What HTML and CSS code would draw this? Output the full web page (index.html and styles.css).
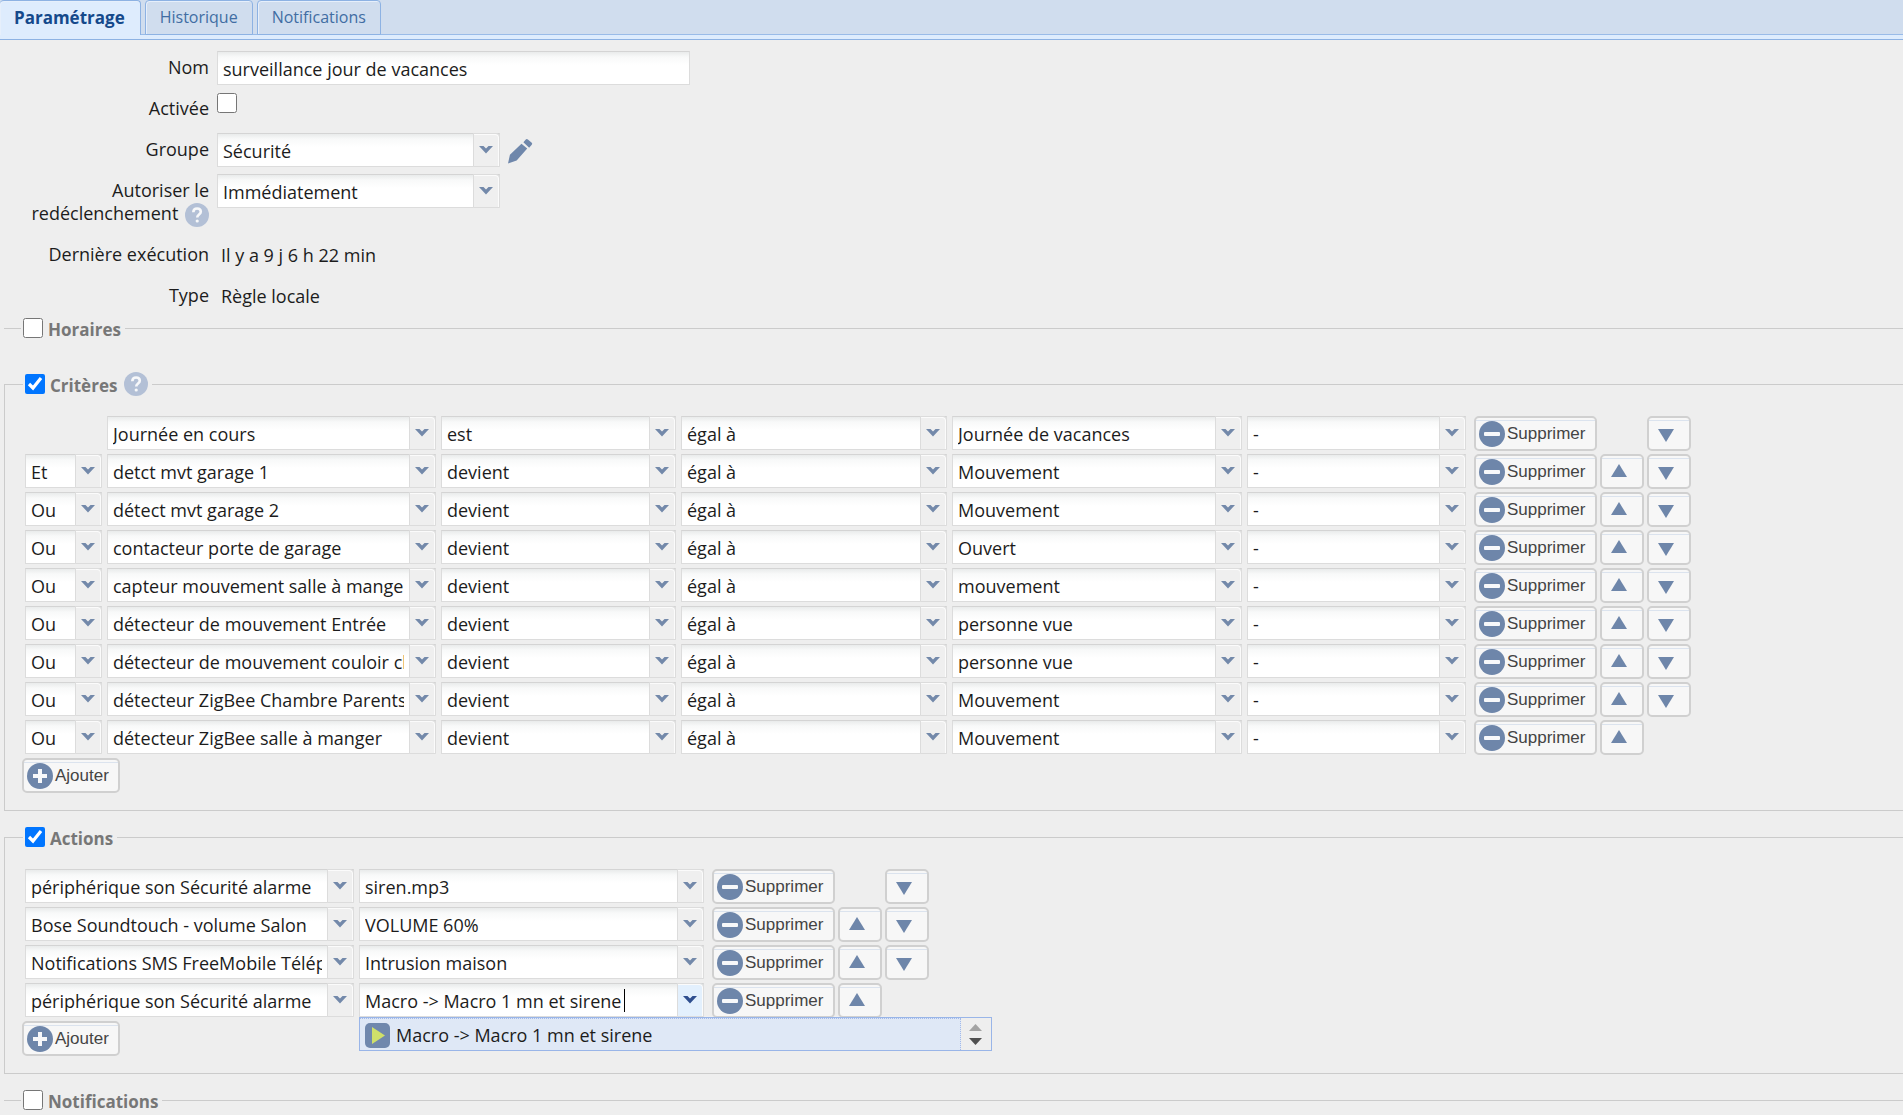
FILE: index.html
```html
<!DOCTYPE html>
<html lang="fr">
<head>
  <meta charset="UTF-8">
  <title>surveillance jour de vacances</title>
  <link rel="stylesheet" href="styles.css">
</head>
<body>
  <svg class="sprite" aria-hidden="true">
    <symbol id="i-chevron" viewBox="0 0 16 10"><path d="M1 1h4.500l2.500 2.500L10.500 1H15L8 8.500z"/></symbol>
    <symbol id="i-up" viewBox="0 0 16 13"><path d="M8 0l8 13H0z"/></symbol>
    <symbol id="i-down" viewBox="0 0 16 13"><path d="M0 0h16L8 13z"/></symbol>
    <symbol id="i-minus" viewBox="0 0 26 26"><circle cx="13" cy="13" r="13"/><rect class="ink" x="5" y="11" width="16" height="4" rx="1"/></symbol>
    <symbol id="i-plus" viewBox="0 0 26 26"><circle cx="13" cy="13" r="13"/><path class="ink" d="M11 6h4v5h5v4h-5v5h-4v-5H6v-4h5z"/></symbol>
    <symbol id="i-help" viewBox="0 0 24 24"><circle cx="12" cy="12" r="12"/><path class="mark" d="M8.300 9.200c.1-2.400 1.600-3.700 3.800-3.700s3.700 1.300 3.700 3.200c0 2.900-3.600 2.700-3.600 5.900"/><circle class="ink" cx="12.200" cy="18" r="1.600"/></symbol>
    <symbol id="i-pencil" viewBox="0 0 26 26"><path d="M0 26l2-9L14 5.500l6 5L9 23zM16 4l2.500-3q1-1 2.200 0l4 3.500q1 1 0 2L22 9.500z"/></symbol>
  </svg>

  <nav class="tabs">
    <a class="tab active" href="#">Paramétrage</a>
    <a class="tab" href="#">Historique</a>
    <a class="tab" href="#">Notifications</a>
  </nav>

  <main>
    <div class="form">
      <div class="field">
        <label for="nom">Nom</label>
        <input class="text" id="nom" type="text" value="surveillance jour de vacances">
      </div>
      <div class="field">
        <label for="active">Activée</label>
        <input class="check" id="active" type="checkbox">
      </div>
      <div class="field">
        <label for="groupe">Groupe</label>
        <span class="combo w-form">
          <select id="groupe"><option>Sécurité</option></select>
          <span class="trigger"><svg><use href="#i-chevron"/></svg></span>
        </span>
        <svg class="pencil"><use href="#i-pencil"/></svg>
      </div>
      <div class="field tall">
        <label for="delai">Autoriser le redéclenchement <svg class="help"><use href="#i-help"/></svg></label>
        <span class="combo w-form">
          <select id="delai"><option>Immédiatement</option></select>
          <span class="trigger"><svg><use href="#i-chevron"/></svg></span>
        </span>
      </div>
      <div class="field">
        <span class="label">Dernière exécution</span>
        <span class="display">Il y a 9 j 6 h 22 min</span>
      </div>
      <div class="field">
        <span class="label">Type</span>
        <span class="display">Règle locale</span>
      </div>
    </div>

    <fieldset class="collapsed">
      <legend><input class="check" id="horaires" type="checkbox"><label for="horaires">Horaires</label></legend>
    </fieldset>

    <fieldset>
      <legend><input class="check" id="criteres" type="checkbox" checked><label for="criteres">Critères</label><svg class="help"><use href="#i-help"/></svg></legend>
      <div class="rows" id="criteria"></div>
      <button class="btn add" type="button"><svg><use href="#i-plus"/></svg>Ajouter</button>
    </fieldset>

    <fieldset>
      <legend><input class="check" id="actions" type="checkbox" checked><label for="actions">Actions</label></legend>
      <div class="rows" id="action-list"></div>
      <button class="btn add" type="button"><svg><use href="#i-plus"/></svg>Ajouter</button>
    </fieldset>

    <fieldset class="collapsed">
      <legend><input class="check" id="notifications" type="checkbox"><label for="notifications">Notifications</label></legend>
    </fieldset>
  </main>

  <script>
    const criteria = [
      ["", "Journée en cours", "est", "égal à", "Journée de vacances", "-"],
      ["Et", "detct mvt garage 1", "devient", "égal à", "Mouvement", "-"],
      ["Ou", "détect mvt garage 2", "devient", "égal à", "Mouvement", "-"],
      ["Ou", "contacteur porte de garage", "devient", "égal à", "Ouvert", "-"],
      ["Ou", "capteur mouvement salle à manger", "devient", "égal à", "mouvement", "-"],
      ["Ou", "détecteur de mouvement Entrée", "devient", "égal à", "personne vue", "-"],
      ["Ou", "détecteur de mouvement couloir chambres", "devient", "égal à", "personne vue", "-"],
      ["Ou", "détecteur ZigBee Chambre Parents", "devient", "égal à", "Mouvement", "-"],
      ["Ou", "détecteur ZigBee salle à manger", "devient", "égal à", "Mouvement", "-"]
    ];
    const actions = [
      ["périphérique son Sécurité alarme", "siren.mp3"],
      ["Bose Soundtouch - volume Salon", "VOLUME 60%"],
      ["Notifications SMS FreeMobile Téléphone", "Intrusion maison"],
      ["périphérique son Sécurité alarme", "Macro -> Macro 1 mn et sirene"]
    ];
    const criteriaCols = [["w-link", "Liaison"], ["w-source", "Critère"], ["w-verb", "Verbe"], ["w-test", "Opérateur"], ["w-value", "Valeur"], ["w-extra", "Durée"]];
    const actionCols = [["w-source", "Périphérique"], ["w-action", "Valeur"]];

    const icon = name => `<svg><use href="#i-${name}"/></svg>`;

    function combo(value, col) {
      if (!value) return `<span class="combo ${col[0]} hidden"></span>`;
      return `<span class="combo ${col[0]}"><select aria-label="${col[1]}"><option>${value}</option></select><span class="trigger">${icon("chevron")}</span></span>`;
    }

    // editable combo with its suggestion list open
    function openCombo(value, col) {
      return `<span class="combo open ${col[0]}">
        <input type="text" aria-label="${col[1]}" value="${value}">
        <span class="caret"></span>
        <span class="trigger">${icon("chevron")}</span>
        <span class="list">
          <span class="item"><svg class="play" viewBox="0 0 25 25"><rect width="25" height="25" rx="5"/><path d="M7 4l13 8.500L7 21z"/></svg>${value}</span>
          <span class="spin"><svg viewBox="0 0 13 21"><path class="off" d="M6.500 0L13 7H0z"/><path d="M0 14h13l-6.500 7z"/></svg></span>
        </span>
      </span>`;
    }

    function render(id, rows, cols) {
      document.getElementById(id).innerHTML = rows.map((row, i) => {
        const last = i === rows.length - 1;
        const cells = row.map((v, c) =>
          id === "action-list" && last && c === 1 ? openCombo(v, cols[c]) : combo(v, cols[c])
        ).join("");
        return `<div class="row">${cells}
          <span class="tools">
            <button class="btn remove" type="button">${icon("minus")}Supprimer</button>
            <button class="btn move ${i === 0 ? "hidden" : ""}" type="button" aria-label="Monter">${icon("up")}</button>
            <button class="btn move down ${last ? "hidden" : ""}" type="button" aria-label="Descendre">${icon("down")}</button>
          </span>
        </div>`;
      }).join("");
    }

    render("criteria", criteria, criteriaCols);
    render("action-list", actions, actionCols);
  </script>
</body>
</html>
```
FILE: styles.css
```css
* {
  box-sizing: border-box;
}
body {
  margin: 0;
  background: #eeeeee;
  color: #1c1c1c;
  font-family: "Open Sans", "Noto Sans", sans-serif;
  font-size: 18px;
  line-height: 23px;
  overflow: hidden;
}
.sprite {
  position: absolute;
  width: 0;
  height: 0;
}
.hidden {
  visibility: hidden;
}

/* tabs */
.tabs {
  display: flex;
  align-items: flex-start;
  gap: 4px;
  height: 40px;
  background: linear-gradient(#d0ddee 34px, #99bbe8 34px, #99bbe8 35px, #deecfd 35px, #deecfd 39px, #8db2e3 39px);
}
.tab {
  height: 35px;
  padding: 5px 14px 0;
  border: 1px solid #8db2e3;
  border-radius: 4px 4px 0 0;
  box-shadow: inset 1px 1px 0 #e6effb;
  background: #d0ddee;
  color: #416da3;
  font-size: 16px;
  text-decoration: none;
}
.tab.active {
  padding: 5px 15px 0 14px;
  border-bottom: 0;
  border-left: 0;
  background: #deecfd;
  color: #15498b;
  font-size: 17px;
  font-weight: bold;
}

/* top form */
.form {
  display: flex;
  flex-direction: column;
  gap: 7px;
  padding: 11px 0 3px;
}
.field {
  display: flex;
  align-items: flex-start;
  gap: 8px;
  min-height: 34px;
}
.field.tall {
  min-height: 57px;
}
.field > label,
.label {
  width: 209px;
  padding: 5px 0 0 20px;
  text-align: right;
}
.display {
  padding: 6px 0 0 4px;
}
.pencil {
  width: 25px;
  height: 26px;
  margin-top: 5px;
  fill: #6f87ab;
}
.help {
  width: 24px;
  height: 24px;
  margin: 0 0 -7px 2px;
  fill: #b3c0d6;
}
.ink {
  fill: #f7f8fa;
}
.mark {
  fill: none;
  stroke: #f7f8fa;
  stroke-width: 2.6;
}
.check {
  width: 20px;
  height: 20px;
  margin: 1px 0 0;
}

/* text boxes and combos */
.text,
.combo select,
.combo input {
  height: 34px;
  margin: 0;
  padding: 2px 5px 0;
  border: 1px solid #dcdcdc;
  border-top-color: #d4d4d4;
  border-radius: 0;
  background: linear-gradient(#e9ebeb, #f8f9f9 5px, #ffffff 13px);
  color: #1c1c1c;
  font: inherit;
  outline: 0;
}
.text {
  width: 473px;
}
.combo {
  position: relative;
  display: flex;
  height: 34px;
}
.combo select,
.combo input {
  width: 100%;
  padding-right: 31px;
  appearance: none;
}
.trigger {
  position: absolute;
  top: 0;
  right: 0;
  display: flex;
  justify-content: center;
  width: 27px;
  height: 34px;
  padding: 11px 2px 0 0;
  border: 1px solid #dcdcdc;
  border-top-right-radius: 4px;
  box-shadow: inset -1px 1px 0 #fbfbfb;
  background: #efefef;
  pointer-events: none;
}
.trigger svg {
  width: 16px;
  height: 10px;
  fill: #7389aa;
}
.w-form { width: 283px; }
.w-link { width: 77px; }
.w-source { width: 329px; }
.w-verb { width: 235px; }
.w-test { width: 266px; }
.w-value { width: 290px; }
.w-extra { width: 219px; }
.w-action { width: 345px; }

/* open combo */
.open .trigger {
  background: #e3f0fd;
}
.open .trigger svg {
  fill: #2f4f8f;
}
.caret {
  position: absolute;
  top: 6px;
  left: 265px;
  width: 1px;
  height: 23px;
  background: #000000;
}
.list {
  position: absolute;
  top: 34px;
  left: 0;
  z-index: 5;
  display: flex;
  width: 633px;
  height: 34px;
  border: 1px solid #99b5e8;
  background: #eeeeee;
}
.item {
  display: flex;
  flex: 1;
  align-items: center;
  gap: 6px;
  padding: 1px 0 0 5px;
  border: 1px dotted #a3bae9;
  border-width: 1px 1px 0 0;
  background: #dfe8f6;
}
.play {
  width: 25px;
  height: 25px;
  fill: #7088ad;
}
.play path {
  fill: #cfe06a;
}
.spin {
  display: flex;
  align-items: center;
  justify-content: center;
  width: 30px;
  padding-right: 2px;
}
.spin svg {
  width: 13px;
  height: 21px;
  fill: #505050;
}
.spin .off {
  fill: #a3a3a3;
}

/* sections */
fieldset {
  min-width: 0;
  margin: 0 0 14px 4px;
  padding: 20px 0 17px 20px;
  border: 1px solid #cbcbcb;
  border-right: 0;
}
fieldset.collapsed {
  padding: 18px 0 0 19px;
  border-width: 1px 0 0;
}
legend {
  display: flex;
  align-items: center;
  gap: 5px;
  height: 24px;
  margin-left: -2px;
  padding: 0 4px 0 2px;
  color: #777777;
  font-size: 17px;
  font-weight: bold;
}
legend label {
  padding-top: 2px;
}
legend .check {
  margin: 0;
}
legend .help {
  margin: 0 0 0 2px;
}
.rows {
  display: flex;
  flex-direction: column;
  gap: 4px;
}
.row {
  display: flex;
  gap: 5px;
}
.tools {
  display: flex;
  gap: 3px;
  margin-left: 3px;
}

/* buttons */
.btn {
  display: flex;
  align-items: center;
  gap: 2px;
  height: 35px;
  margin: 0;
  padding: 0 3px;
  border: 2px solid #d0d0d0;
  border-radius: 5px;
  background: linear-gradient(#f7f7f7 2px, #dbe3ee 2px, #dbe3ee 3px, #f7f7f7 3px);
  color: #444444;
  font-family: "Liberation Sans", Arial, sans-serif;
  font-size: 17px;
}
.btn svg {
  width: 26px;
  height: 26px;
  fill: #6e86aa;
}
.row .btn {
  margin-bottom: -1px;
}
.remove {
  width: 123px;
}
.move {
  width: 44px;
  padding: 0 0 3px 9px;
}
.move svg {
  width: 16px;
  height: 13px;
}
.move.down {
  padding: 3px 0 0 9px;
}
.add {
  width: 98px;
  margin: 4px 0 0 -3px;
}
```
